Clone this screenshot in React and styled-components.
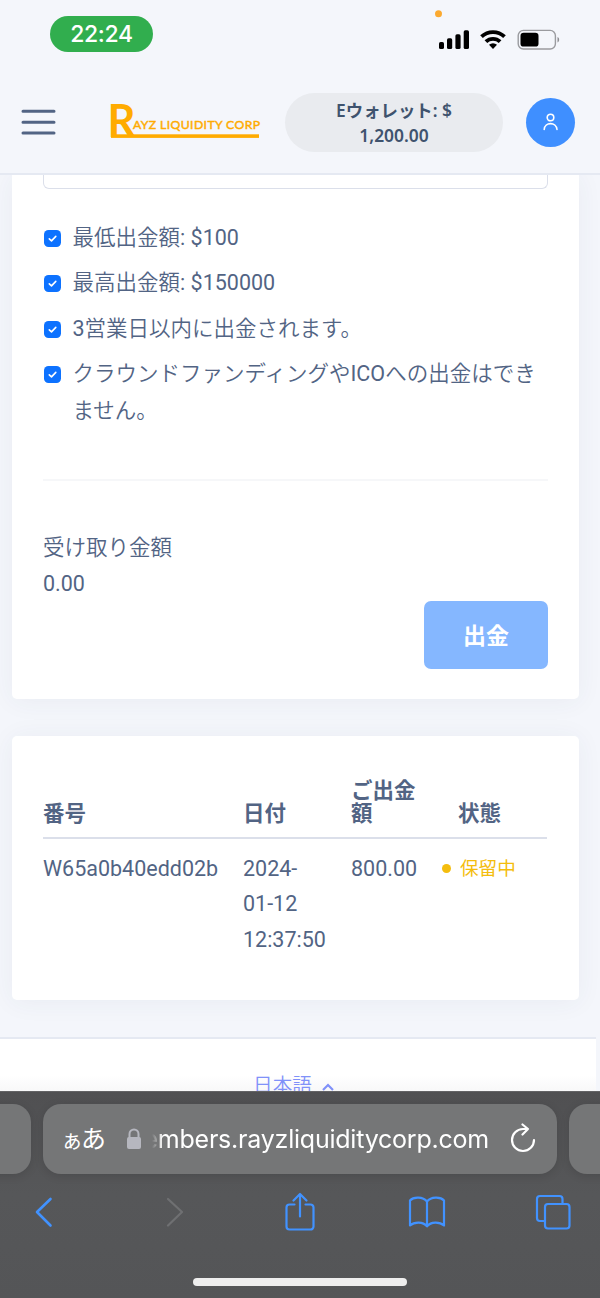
import React from "react";
import styled, { createGlobalStyle } from "styled-components";

const GlobalStyle = createGlobalStyle`
  * {
    box-sizing: border-box;
  }

  body {
    margin: 0;
    background: #f4f6fb;
    color: #526484;
    font-family: Roboto, "Noto Sans CJK JP", sans-serif;
    font-size: 21.5px;
  }
`;

const Screen = styled.div`
  display: flex;
  flex-direction: column;
  width: 600px;
  height: 1298px;
  overflow: hidden;
  background: #f4f6fb;
`;

const StatusBar = styled.div`
  display: flex;
  justify-content: space-between;
  flex: none;
  height: 70px;
  padding: 16px 40px 0 50px;
`;

const Clock = styled.div`
  width: 103px;
  height: 36px;
  border-radius: 18px;
  background: #31ae4e;
  color: white;
  font-family: Inter, sans-serif;
  font-size: 23px;
  font-weight: 500;
  line-height: 37px;
  letter-spacing: -0.3px;
  text-align: center;
`;

const StatusIcons = styled.svg`
  width: 130px;
  height: 54px;
  margin-top: -16px;
`;

const Header = styled.header`
  display: flex;
  align-items: center;
  flex: none;
  height: 105px;
  padding: 1px 25px 0 21px;
  border-bottom: 2px solid #e5e9f2;

  .menu {
    width: 36px;
    height: 30px;
  }

  .logo {
    width: 154px;
    height: 40px;
    margin-left: 53px;
    overflow: visible;
  }
`;

const Wallet = styled.div`
  width: 218px;
  height: 59px;
  margin-left: 21px;
  padding-top: 5px;
  border-radius: 30px;
  background: #e9ebef;
  color: #3f536e;
  font-family: "Noto Sans", "Noto Sans CJK JP", sans-serif;
  font-size: 17.4px;
  font-weight: 600;
  line-height: 25px;
  text-align: center;
`;

const Avatar = styled.div`
  display: flex;
  align-items: center;
  justify-content: center;
  width: 49px;
  height: 49px;
  margin-left: auto;
  border-radius: 50%;
  background: #3f8fff;
`;

const Content = styled.main`
  flex: none;
  height: 862px;
  padding: 0 21px 0 12px;
  overflow: hidden;
`;

const Card = styled.section`
  height: ${(props) => props.$height}px;
  margin-bottom: 37px;
  padding: 0 31px;
  border-radius: ${(props) => (props.$cut ? "0 0 5px 5px" : "5px")};
  background: white;
  box-shadow: 0 2px 26px rgba(54, 74, 99, 0.06);
`;

const InputTail = styled.div`
  height: 14px;
  border: 1.5px solid #dbdfea;
  border-top: none;
  border-radius: 0 0 6px 6px;
`;

const Terms = styled.ul`
  margin: 30px 0 0;
  padding: 0;
  list-style: none;
`;

const Term = styled.li`
  display: flex;
  gap: 11.5px;
  margin-bottom: 8.4px;
  line-height: 37px;

  svg {
    flex: none;
    width: 17px;
    height: 17px;
    margin: 11px 0 0 1px;
  }
`;

const Jp = styled.span`
  font-weight: 350;
`;

const Divider = styled.hr`
  height: 2px;
  margin: 50px 0 49px;
  border: none;
  background: #f6f7f9;
`;

const Amount = styled.div`
  line-height: 35.5px;
`;

const ButtonRow = styled.div`
  display: flex;
  justify-content: flex-end;
`;

const WithdrawButton = styled.button`
  width: 124px;
  height: 68px;
  padding: 0 0 3px;
  border: none;
  border-radius: 7px;
  background: #85b7ff;
  color: white;
  font-family: "Noto Sans CJK JP", sans-serif;
  font-size: 23px;
  font-weight: 700;
`;

const Table = styled.table`
  width: 504px;
  border-collapse: collapse;
  table-layout: fixed;

  th {
    height: 102px;
    padding: 0 0 12px;
    border-bottom: 2px solid #dbdfea;
    font-weight: 700;
    line-height: 23px;
    text-align: left;
    vertical-align: bottom;
  }

  th:last-child {
    padding-left: 16px;
  }

  td {
    padding: 12px 0 0;
    line-height: 35.4px;
    vertical-align: top;
  }
`;

const Status = styled.span`
  display: flex;
  align-items: center;
  gap: 9px;
  padding-top: 1px;
  color: #f4bd0e;
  font-size: 18.6px;

  &::before {
    content: "";
    width: 9px;
    height: 9px;
    margin-top: -2px;
    border-radius: 50%;
    background: #f4bd0e;
  }
`;

const Footer = styled.footer`
  display: flex;
  justify-content: center;
  flex: none;
  width: 596px;
  height: 54px;
  padding: 28px 9px 0 0;
  overflow: hidden;
  border-top: 2px solid #e5e9f2;
  background: linear-gradient(white 70%, #f8f8f9);
  color: #8091f9;
  font-size: 19.6px;
  line-height: 38px;

  svg {
    width: 12px;
    height: 8px;
    margin: 16px 0 0 10px;
  }
`;

const BrowserBar = styled.div`
  flex: 1;
  background: linear-gradient(#505052, #565759 50%, #545557);
  border-top: 1px solid #636365;
`;

const Tabs = styled.div`
  display: flex;
  gap: 12px;
  width: 660px;
  margin: 12px 0 0 -30px;
`;

const Tab = styled.div`
  flex: none;
  width: 61px;
  height: 70px;
  border-radius: 18px;
  background: #757677;
  box-shadow: 0 2px 10px rgba(0, 0, 0, 0.12);
`;

const AddressBar = styled(Tab)`
  display: flex;
  align-items: center;
  width: 514px;
  padding-left: 19px;
  color: white;

  svg {
    flex: none;
  }

  .reload {
    margin: -3px 0 0 21px;
  }
`;

const ReaderLabel = styled.span`
  flex: none;
  width: 64px;
  padding-top: 3px;
  font-size: 25px;
  line-height: 68px;
  letter-spacing: -2px;

  small {
    margin-left: -1px;
    font-size: 22px;
  }
`;

const Url = styled.span`
  display: flex;
  justify-content: flex-end;
  flex: none;
  width: 337px;
  margin-left: 10px;
  overflow: hidden;
  font-family: Inter, sans-serif;
  font-size: 25px;
  line-height: 40px;
  letter-spacing: -0.22px;
  white-space: nowrap;
  mask-image: linear-gradient(90deg, transparent, rgba(0, 0, 0, 0.4) 5px, black 10px);
`;

const Toolbar = styled.nav`
  display: grid;
  grid-template-columns: repeat(5, 127px);
  place-items: center;
  height: 76px;
  margin-left: -18px;

  svg {
    fill: none;
    stroke: #4192ff;
    stroke-width: 2.2;
    stroke-linecap: round;
    stroke-linejoin: round;
  }

  .back {
    margin-right: 3px;
  }

  .forward {
    margin-left: 4px;
    stroke: #6f7072;
  }

  .tabs {
    margin-right: 2px;
  }
`;

const HomeIndicator = styled.div`
  width: 214px;
  height: 8px;
  margin: 28px auto 0;
  border-radius: 4px;
  background: #eeeeee;
`;

const terms = [
  { label: "最低出金額", value: ": $100" },
  { label: "最高出金額", value: ": $150000" },
  { value: "3", after: "営業日以内に出金されます。" },
  {
    label: "クラウンドファンディングや",
    value: "ICO",
    after: "への出金はできません。",
  },
];

const CheckIcon = () => (
  <svg viewBox="0 0 17 17">
    <rect width="17" height="17" rx="4.5" fill="#0d72ff" />
    <path
      d="M5.3 8.8l2.2 2.1 4.3-4.5"
      fill="none"
      stroke="white"
      strokeWidth="1.6"
      strokeLinecap="round"
      strokeLinejoin="round"
    />
  </svg>
);

const PhoneStatus = () => (
  <StatusIcons viewBox="430 0 130 54">
    <circle cx="438.5" cy="13.7" r="3.5" fill="#fba92f" />
    <rect x="439" y="42" width="5" height="7" rx="1.6" />
    <rect x="447" y="38.3" width="5.2" height="10.7" rx="1.6" />
    <rect x="455.4" y="34.3" width="5.2" height="14.7" rx="1.6" />
    <rect x="463.7" y="30.3" width="5.3" height="18.7" rx="1.6" />
    <g fill="none" stroke="black" strokeWidth="3.8">
      <path d="M481.5 36.7a16.5 16.5 0 0 1 23 0" />
      <path d="M485.9 41.7a10.3 10.3 0 0 1 14.2 0" />
    </g>
    <path d="M493 49l-4-4.2a6 6 0 0 1 8 0z" />
    <rect
      x="518.2"
      y="30.4"
      width="37.2"
      height="18.6"
      rx="5.2"
      fill="none"
      stroke="#9a9b9f"
      strokeWidth="1.4"
    />
    <rect x="520.5" y="32.8" width="18" height="13.8" rx="3.2" />
    <path d="M557.5 37c2.2.8 2.2 4.6 0 5.4z" fill="#8c8d91" />
  </StatusIcons>
);

const Logo = () => (
  <svg className="logo" viewBox="0 0 154 40" fill="#ffab00">
    <text
      x="-2.6"
      y="35"
      fontFamily="Lato"
      fontSize="46"
      fontWeight="700"
      textLength="28"
      lengthAdjust="spacingAndGlyphs"
    >
      R
    </text>
    <text
      x="23"
      y="26.7"
      fontFamily="Lato"
      fontSize="12.2"
      fontWeight="400"
      stroke="#ffab00"
      strokeWidth="0.45"
      textLength="127"
    >
      AYZ LIQUIDITY CORP
    </text>
    <rect x="1" y="32.3" width="148" height="3.6" />
  </svg>
);

const BrowserTools = () => (
  <Toolbar>
    <svg className="back" width="22" height="36" viewBox="0 0 22 36">
      <path d="M17.5 5L4 18l13.5 13.5" strokeWidth="2.6" />
    </svg>
    <svg className="forward" width="22" height="36" viewBox="0 0 22 36">
      <path d="M4 5l14 13L4 31.5" />
    </svg>
    <svg width="32" height="40" viewBox="0 0 32 40">
      <path d="M10.5 12.5h-5a3 3 0 0 0-3 3v19a3 3 0 0 0 3 3h21a3 3 0 0 0 3-3v-19a3 3 0 0 0-3-3h-5M16 24.500V2M9.500 8.500L16 2l6.500 6.500" />
    </svg>
    <svg width="38" height="34" viewBox="0 0 38 34">
      <path d="M19 6.500C15 1.500 5.500 1.500 2 5.500v25c4.500-4 13-4 17 .8c4-4.800 12.500-4.800 17-.8v-25C32.500 1.500 23 1.500 19 6.500V31" />
    </svg>
    <svg className="tabs" width="36" height="36" viewBox="0 0 36 36">
      <path d="M9.500 27H5a3 3 0 0 1-3-3V5a3 3 0 0 1 3-3h19.500a3 3 0 0 1 3 3v4.500" />
      <rect x="10" y="10" width="24.5" height="24.5" rx="3" />
    </svg>
  </Toolbar>
);

const App = () => {
  return (
    <>
      <GlobalStyle />
      <Screen>
        <StatusBar>
          <Clock>22:24</Clock>
          <PhoneStatus />
        </StatusBar>
        <Header>
          <svg className="menu" viewBox="0 0 36 30">
            <path
              d="M2 4.2h31M2 15.2h31M2 26h31"
              stroke="#526484"
              strokeWidth="3"
              strokeLinecap="round"
            />
          </svg>
          <Logo />
          <Wallet>
            Eウォレット: $<br />
            1,200.00
          </Wallet>
          <Avatar>
            <svg
              width="16"
              height="18"
              viewBox="0 0 16 18"
              fill="none"
              stroke="white"
              strokeWidth="1.6"
              strokeLinecap="round"
            >
              <circle cx="7.5" cy="4.5" r="3.3" />
              <path d="M1.2 16.5c.5-7.8 12.1-7.8 12.8 0" />
            </svg>
          </Avatar>
        </Header>

        <Content>
          <Card $height={524} $cut>
            <InputTail />
            <Terms>
              {terms.map((term, i) => (
                <Term key={i}>
                  <CheckIcon />
                  <div>
                    <Jp>{term.label}</Jp>
                    {term.value}
                    <Jp>{term.after}</Jp>
                  </div>
                </Term>
              ))}
            </Terms>
            <Divider />
            <Amount>
              <Jp>受け取り金額</Jp>
              <div>0.00</div>
            </Amount>
            <ButtonRow>
              <WithdrawButton>出金</WithdrawButton>
            </ButtonRow>
          </Card>

          <Card $height={264}>
            <Table>
              <colgroup>
                <col width="200" />
                <col width="108" />
                <col width="91" />
                <col width="105" />
              </colgroup>
              <thead>
                <tr>
                  <th>番号</th>
                  <th>日付</th>
                  <th>
                    ご出金
                    <br />額
                  </th>
                  <th>状態</th>
                </tr>
              </thead>
              <tbody>
                <tr>
                  <td>W65a0b40edd02b</td>
                  <td>
                    2024-
                    <br />
                    01-12
                    <br />
                    12:37:50
                  </td>
                  <td>800.00</td>
                  <td>
                    <Status>保留中</Status>
                  </td>
                </tr>
              </tbody>
            </Table>
          </Card>
        </Content>

        <Footer>
          <Jp>日本語</Jp>
          <svg viewBox="0 0 12 8" fill="none" stroke="#8091f9" strokeWidth="2.2">
            <path d="M1 7l5-5 5 5" />
          </svg>
        </Footer>

        <BrowserBar>
          <Tabs>
            <Tab />
            <AddressBar>
              <ReaderLabel>
                <small>ぁ</small>あ
              </ReaderLabel>
              <svg width="16" height="22" viewBox="0 0 16 22">
                <path
                  d="M3.5 10V6a4.500 4.500 0 0 1 9 0v4"
                  fill="none"
                  stroke="#b6b7bf"
                  strokeWidth="2"
                />
                <rect x="1" y="9" width="14" height="12" rx="2" fill="#b6b7bf" />
              </svg>
              <Url>members.rayzliquiditycorp.com</Url>
              <svg
                className="reload"
                width="26"
                height="30"
                viewBox="0 0 26 30"
                fill="none"
                stroke="white"
                strokeWidth="2.2"
                strokeLinecap="round"
                strokeLinejoin="round"
              >
                <path d="M24 17A11 11 0 1 1 13 6h5M12.5 1.5L18 6l-5.5 5.5" />
              </svg>
            </AddressBar>
            <Tab />
          </Tabs>
          <BrowserTools />
          <HomeIndicator />
        </BrowserBar>
      </Screen>
    </>
  );
};

export default App;
